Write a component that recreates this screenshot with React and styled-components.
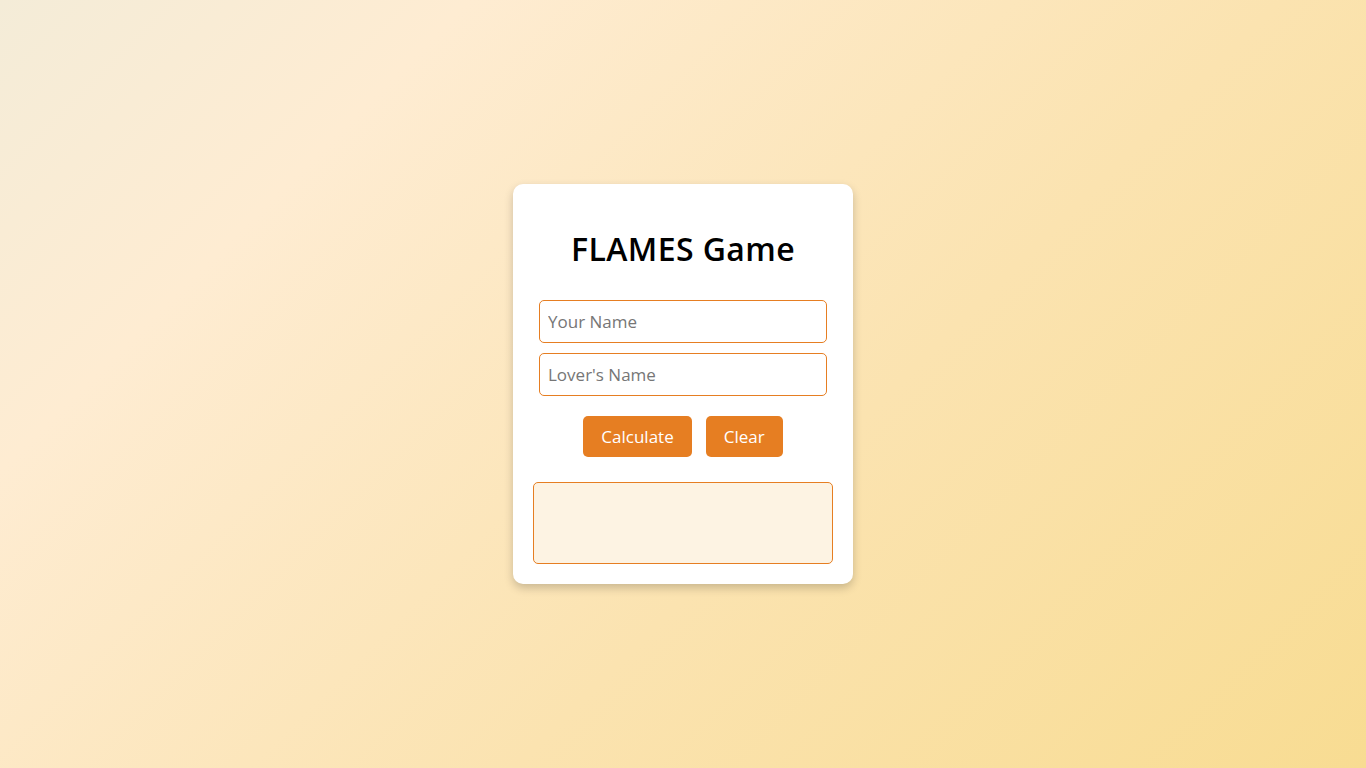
import { useState } from "react";
import styled, { createGlobalStyle } from "styled-components";

const GlobalStyle = createGlobalStyle`
  html, body {
    margin: 0;
    padding: 0;
  }
  body {
    font-family: "Open Sans", "Noto Sans", sans-serif;
    min-height: 100vh;
    background: linear-gradient(135deg, #f4ecd8 0%, #feecd2 22%, #fbe3b0 60%, #f8dc92 100%);
  }
`;

export default function App() {
  const [name1, setName1] = useState("");
  const [name2, setName2] = useState("");
  const [result, setResult] = useState("");

  const calculate = () => {
    let a = name1.toLowerCase().replace(/\s/g, "").split("");
    let b = name2.toLowerCase().replace(/\s/g, "").split("");
    if (!a.length || !b.length) return;
    for (let i = 0; i < a.length; i++) {
      const j = b.indexOf(a[i]);
      if (j !== -1) {
        b.splice(j, 1);
        a.splice(i, 1);
        i--;
      }
    }
    const count = a.length + b.length;
    let flames = ["Friends", "Love", "Affection", "Marriage", "Enemies", "Siblings"];
    let idx = 0;
    while (flames.length > 1 && count > 0) {
      idx = (idx + count - 1) % flames.length;
      flames.splice(idx, 1);
    }
    setResult(flames[0]);
  };

  const clear = () => {
    setName1("");
    setName2("");
    setResult("");
  };

  return (
    <>
      <GlobalStyle />
      <Page>
        <Card>
          <Title>FLAMES Game</Title>
          <Input placeholder="Your Name" value={name1} onChange={(e) => setName1(e.target.value)} />
          <Input placeholder="Lover's Name" value={name2} onChange={(e) => setName2(e.target.value)} />
          <Buttons>
            <Button onClick={calculate}>Calculate</Button>
            <Button onClick={clear}>Clear</Button>
          </Buttons>
          <Result>{result}</Result>
        </Card>
      </Page>
    </>
  );
}

const Page = styled.div`
  min-height: 768px;
  display: flex;
  align-items: center;
  justify-content: center;
`;

const Card = styled.div`
  width: 340px;
  box-sizing: border-box;
  padding: 20px;
  background: #fff;
  border-radius: 10px;
  box-shadow: 0 4px 10px rgba(0, 0, 0, 0.2);
  display: flex;
  flex-direction: column;
  align-items: center;
`;

const Title = styled.h1`
  margin: 25px 0 0;
  height: 66px;
  font-size: 32px;
  font-weight: 600;
  line-height: 40px;
  color: #000;
  letter-spacing: 0.4px;
`;

const Input = styled.input`
  width: 288px;
  height: 43px;
  box-sizing: border-box;
  margin: 5px 0;
  padding: 0 8px;
  font-family: inherit;
  font-size: 17px;
  border: 1px solid #e67e22;
  border-radius: 5px;
  outline: none;
  color: #333;

  &::placeholder {
    color: #767676;
  }
`;

const Buttons = styled.div`
  display: flex;
  gap: 14px;
  margin-top: 15px;
`;

const Button = styled.button`
  height: 41px;
  padding: 0 18px;
  font-family: inherit;
  font-size: 17px;
  color: #fff;
  background: #e67e22;
  border: none;
  border-radius: 5px;
  cursor: pointer;
`;

const Result = styled.div`
  width: 300px;
  height: 82px;
  box-sizing: border-box;
  margin-top: 25px;
  background: #fdf3e3;
  border: 1px solid #e67e22;
  border-radius: 5px;
  display: flex;
  align-items: center;
  justify-content: center;
  font-size: 20px;
  color: #e67e22;
`;
